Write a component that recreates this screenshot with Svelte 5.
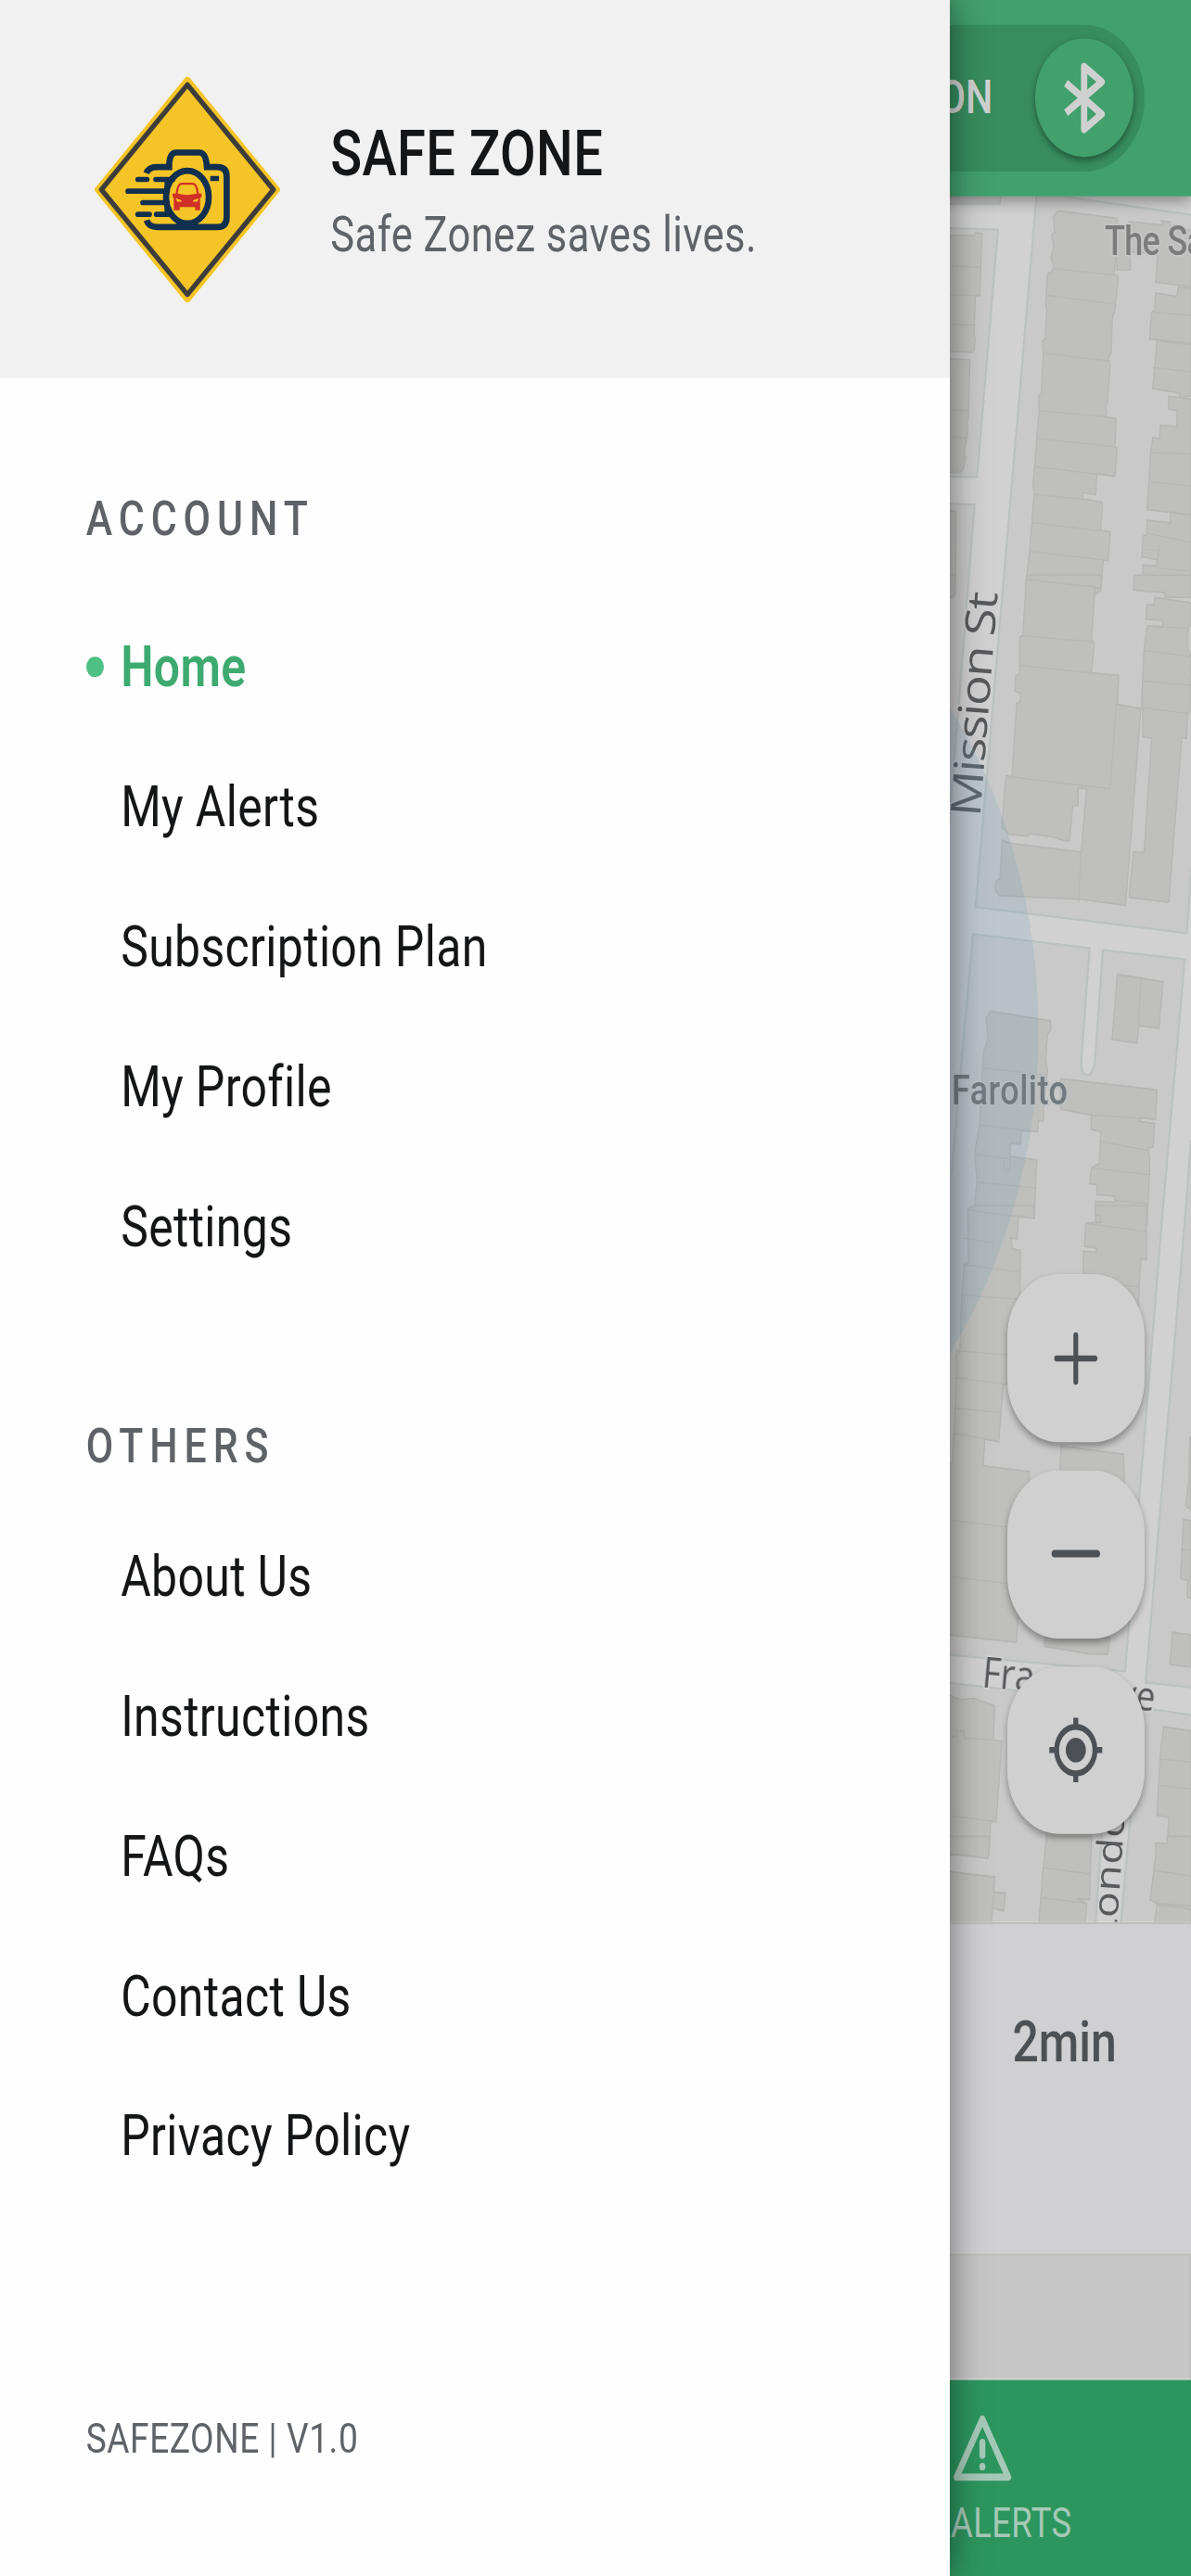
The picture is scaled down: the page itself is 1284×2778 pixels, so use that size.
<script lang="ts">
	type MenuItem = { label: string; active?: boolean };
	type Tile = { y: number; scale: number; buildings: string[]; walls: string };

	const account: MenuItem[] = [
		{ label: 'Home', active: true },
		{ label: 'My Alerts' },
		{ label: 'Subscription Plan' },
		{ label: 'My Profile' },
		{ label: 'Settings' }
	];

	const others: MenuItem[] = [
		{ label: 'About Us' },
		{ label: 'Instructions' },
		{ label: 'FAQs' },
		{ label: 'Contact Us' },
		{ label: 'Privacy Policy' }
	];

	// Street blocks in map coordinates
	const blocks = [
		'1000,205 1080,205 1078,219.6 1000,219.6',
		'1000,245 1076,247.3 1053.3,514.3 1000,513',
		'1000,542 1050.7,543.7 1034,754 1022,900 1000,900',
		'1118,205 1157,213 1290,232 1290,870 1279.3,1006 1051.7,978',
		'1284,1230 1278.7,1300 1235,1814 1290,1820 1290,1230'
	];

	// Building footprints, stored per tile in tile units
	const tiles: Tile[] = [
		{
			y: 0,
			scale: 0.40816,
			buildings: [
				'60,620 152,622 154,614 176,616 169,780 155,780 150,885 155,895 150,925 142,930 60,928',
				'60,947 137,949 132,1105 126,1112 130,1130 126,1160 118,1190 122,1210 116,1238 104,1248 60,1246',
				'60,1346 92,1350 90,1568 60,1568',
				'422,556 614,576 604,724 617,729 608,803 604,826 598,834 594,930 585,945 590,965 582,1060 575,1075 580,1085 575,1100 610,1105 606,1180 613,1183 606,1258 548,1250 544,1306 503,1301 500,1316 566,1326 560,1400 591,1404 584,1480 568,1480 560,1560 545,1568 320,1568 320,1525 330,1455 345,1300 341,1285 346,1235 353,1160 361,1085 359,1045 368,1040 374,930 371,900 380,895 386,820 382,800 388,722 402,718 408,700 398,680 408,650 402,620 412,612 406,572',
				'608,600 656,606 656,712 612,712',
				'650,584 760,594 755,582 785,586 783,596 852,606 852,756 738,745 744,670 650,664',
				'738,773 806,782 811,757 852,760 852,906 718,895 724,825 734,820',
				'742,899 852,910 852,1045 815,1048 815,1038 728,1026',
				'780,1046 852,1054 852,1358 710,1346 722,1190 728,1155 750,1158 753,1122 806,1126 808,1084 780,1080',
				'785,1354 852,1360 852,1568 668,1556 668,1522 695,1525 697,1492 740,1494 742,1478 693,1470 697,1416 708,1412 710,1374 785,1380'
			],
			walls:
				'M60 700L172 706M60 778L169 780M60 855L155 858M60 1080L132 1085M60 1150L126 1158M406 708L604 726M388 780L608 803M374 932L588 953M361 1084L575 1100M353 1157L606 1180M350 1232L606 1258M345 1305L500 1318M338 1380L560 1402M330 1455L584 1480M322 1528L560 1550M738 825L852 832M730 970L852 982M724 1195L852 1198M720 1272L852 1283M710 1408L852 1432M697 1450L748 1455M660 584L668 606M748 1440L744 1500L852 1508'
		},
		{
			y: 620,
			scale: 0.44643,
			buildings: [
				'60,0 88,0 86,50 60,60',
				'320,0 563,0 561,32 542,30 530,155 539,165 530,236 618,242 614,312 690,322 640,798 490,782 232,774 220,762 220,740 234,732 242,640 270,648 497,668 514,516 487,514 487,556 470,556 460,640 445,642 405,632 330,624 325,630 265,626 240,608 254,484 273,487 288,310 300,305 300,285 282,280 284,245 298,238 298,150 308,145',
				'668,0 852,0 852,54 768,52 768,42 666,36',
				'735,54 852,66 852,120 842,128 842,178 852,196 848,252 852,265 848,330 840,340 838,394 822,392 780,790 652,778 666,668 700,670 725,394 697,390 695,255 700,182 710,122 760,124 760,110 706,106 710,72 732,72',
				'614,964 762,982 748,1094 683,1088 678,1130 597,1122',
				'203,1053 397,1076 400,1096 388,1110 382,1170 388,1195 375,1288 375,1318 358,1318 356,1344 303,1342 300,1374 268,1372 266,1404 353,1412 345,1552 292,1550 292,1568 135,1568 132,1540 150,1534 160,1462 152,1394 168,1330 178,1190 182,1150 195,1120 190,1070',
				'430,1216 742,1243 737,1314 688,1310 690,1320 734,1324 730,1380 708,1386 718,1400 718,1445 710,1568 543,1568 543,1512 604,1514 606,1500 548,1496 548,1472 524,1470 530,1432 556,1420 560,1344 528,1338 530,1304 430,1290'
			],
			walls:
				'M318 10L560 30M303 146L530 160M300 218L530 236M273 487L590 516L618 242M497 668L488 788M690 322L695 255M710 122L842 128M700 182L852 196M697 255L848 266M697 320L840 334M690 970L683 1088M178 1190L388 1208M168 1328L356 1344M155 1400L266 1410M160 1466L352 1480M150 1535L292 1556M246 1408L268 1410L264 1438L248 1436ZM530 1304L737 1314M560 1368L718 1390M530 1432L718 1448M606 1510L710 1518'
		},
		{
			y: 1300,
			scale: 0.44643,
			buildings: [
				'145,0 344,0 344,30 293,24 293,38 290,80 270,78 274,104 301,108 298,265 258,430 245,432 230,570 185,564 180,628 330,642 287,1054 60,1036 60,625 80,622 90,480 92,360 105,345 110,220 118,142 132,135 130,10',
				'543,0 708,0 708,130 690,128 684,200 680,300 500,300 504,110 545,112 545,102 508,98 512,42 560,40 560,24 543,22',
				'432,580 634,600 637,680 425,680',
				'380,1042 590,1042 583,1084 520,1082 378,1064',
				'60,1180 105,1192 150,1190 218,1208 212,1290 240,1294 222,1488 204,1486 198,1568 60,1568',
				'848,560 852,560 852,735 835,725 840,694 845,665',
				'828,758 852,760 852,948 840,946 842,905 818,900',
				'792,1030 852,1036 852,1114 784,1108',
				'763,1258 852,1268 852,1548 776,1538 780,1478 742,1472 752,1330',
				'385,1510 530,1510 525,1568 380,1568'
			],
			walls:
				'M130 10L293 26M118 142L296 160M110 215L296 226M92 350L256 360M92 415L245 430M88 488L236 500M84 550L228 568M60 758L258 776M60 895L256 912M118 78L215 90M512 42L706 62M500 180L684 196M60 1280L94 1282L94 1268L118 1270L118 1286L212 1290M60 1472L222 1488M818 830L852 832M750 1336L852 1344M746 1400L852 1408'
		},
		{
			y: 1980,
			scale: 0.50886,
			buildings: [
				'60,0 200,0 196,46 60,36',
				'60,74 218,86 214,118 252,120 246,158 210,152 206,184 60,184',
				'385,0 530,0 524,134 485,132 515,142 510,184 360,184 372,80',
				'775,0 852,0 852,148 742,142 720,134 738,40 738,14 775,16',
				'742,144 852,154 852,184 734,184'
			],
			walls: 'M374 66L528 80M367 130L515 142M732 72L852 84M214 118L210 152'
		}
	];
</script>

{#snippet menu(title: string, items: MenuItem[])}
	<section class="group">
		<h2>{title}</h2>
		<ul>
			{#each items as item}
				<li class:active={item.active}>
					<span class="dot"></span>
					<span>{item.label}</span>
				</li>
			{/each}
		</ul>
	</section>
{/snippet}

<div class="viewport">
	<div class="screen">
		<main class="home">
			<header class="topbar">
				<div class="switch">
					<span>ON</span>
					<div class="knob">
						<svg viewBox="0 0 24 24" width="24" height="24">
							<path d="M6.5 8.3L17.3 16L12 19.8V4.2L17.3 8L6.5 15.7" />
						</svg>
					</div>
				</div>
			</header>

			<div class="map">
				<svg class="tiles" viewBox="0 211.4 1284 1861.2" preserveAspectRatio="none">
					<rect x="0" y="205" width="1284" height="1875" fill="#d1d1d2" />
					<g class="blocks">
						{#each blocks as points}
							<polygon {points} />
						{/each}
						<path d="M1049 1007L1174.7 1022L1165.5 1146Q1166 1159 1171.7 1159Q1179 1159 1180.5 1142L1189 1024L1277.3 1034L1254 1300L1213 1802L1000 1782V1300L1026 1263L1036 1150Z" />
						<path d="M1000 1812L1198 1834L1180 2090H1000Z" />
						<path d="M1229 1841L1290 1850V2090H1207Z" />
					</g>
					{#each tiles as tile}
						<g class="buildings" transform="translate(1000 {tile.y}) scale(.33333 {tile.scale})">
							{#each tile.buildings as points}
								<polygon {points} />
							{/each}
							<path d={tile.walls} />
						</g>
					{/each}
					<g class="street">
						<text transform="translate(1056.5 881) rotate(-85.5) scale(1.22 1)" font-size="45" textLength="199">Mission St</text>
						<text transform="translate(1058 1819) rotate(5) scale(1 1.2)" font-size="38">Fra</text>
						<text transform="translate(1205 1841) rotate(6) scale(1 1.2)" font-size="37">ve</text>
						<text class="wide" transform="translate(1203 2093) rotate(-86) scale(1.22 1)" font-size="38">London</text>
					</g>
					<g class="place">
						<text transform="translate(1191 274.5) scale(1 1.22)" font-size="36" textLength="108">The Sa</text>
					</g>
					<ellipse cx="643" cy="1110.5" rx="476.5" ry="580" fill="#78a5b9" fill-opacity=".22" />
					<g class="place tinted">
						<text transform="translate(1026 1191) scale(1 1.22)" font-size="36" textLength="125">Farolito</text>
					</g>
				</svg>

				<div class="controls">
					<button aria-label="Zoom in">
						<svg viewBox="0 0 24 24" width="24" height="24">
							<path d="M12 6.2V17.8M6.2 12H17.8" stroke-width="1.45" />
						</svg>
					</button>
					<button aria-label="Zoom out">
						<svg viewBox="0 0 24 24" width="24" height="24">
							<path d="M5.6 12H18.4" stroke-width="1.85" />
						</svg>
					</button>
					<button aria-label="Locate me">
						<svg class="locate" viewBox="0 0 24 24" width="24" height="24">
							<circle cx="12" cy="12" r="5.8" />
							<circle cx="12" cy="12" r="2.3" fill="currentColor" />
							<path d="M12 4V6M12 18V20M4 12H6M18 12H20" />
						</svg>
					</button>
				</div>
			</div>

			<div class="status"><span>2min</span></div>
			<div class="strip"></div>

			<nav class="tabbar">
				<div class="tab">
					<svg viewBox="0 0 18 17" width="18" height="17">
						<path d="M9 1.3L16.8 15.7H1.2Z" stroke-width="1.8" />
						<path d="M9 7.1V10.3M9 13.1V13.15" stroke-width="1.8" />
					</svg>
					<span>ALERTS</span>
				</div>
			</nav>
		</main>

		<aside class="drawer">
			<header class="brand">
				<svg class="logo" viewBox="65 66 600 730" preserveAspectRatio="none">
					<path d="M365 76L655 431L365 786L75 431Z" fill="#f5c426" stroke="#f5c426" stroke-width="20" stroke-linejoin="round" />
					<path d="M365 92L643 431L365 770L87 431Z" fill="none" stroke="#3d3d3b" stroke-width="16" stroke-linejoin="round" />
					<g fill="none" stroke="#112f4e" stroke-width="20">
						<path d="M232 378Q240 358 266 358H306Q306 311 328 311H404Q425 311 428 358H462Q492 358 492 388V520Q492 552 462 552H268Q240 552 233 530" />
						<ellipse cx="365" cy="455" rx="69" ry="85" />
						<path d="M205 398H234M263 398H318M173 436H300M221 473H300M205 511H242M265 511H312" stroke-width="17" stroke-linecap="round" />
						<path d="M439 395H467" stroke-width="16" />
						<path d="M298 400V510" stroke-width="14" />
						<path d="M330 546H398" stroke-width="18" />
					</g>
					<path d="M330 446Q334 412 346 412H383Q395 412 399 446" fill="none" stroke="#d03027" stroke-width="7" />
					<path d="M317 444H334Q364 452 395 444H411V454L406 459V498H390V487H340V498H321V459L317 454Z" fill="#d03027" />
					<path d="M327 459L344 465L347 470H332ZM402 459L385 465L382 470H397Z" fill="#f5c426" />
				</svg>
				<div class="brand-text">
					<h1>SAFE ZONE</h1>
					<p>Safe Zonez saves lives.</p>
				</div>
			</header>

			{@render menu('ACCOUNT', account)}
			{@render menu('OTHERS', others)}

			<footer>SAFEZONE | V1.0</footer>
		</aside>
	</div>
</div>

<style>
	:global(body) {
		margin: 0;
		background: #fefefe;
	}

	.viewport {
		width: 1284px;
		height: 2778px;
		overflow: hidden;
	}

	/* 360x640 layout stretched over the whole viewport */
	.screen {
		position: relative;
		width: 360px;
		height: 640px;
		overflow: hidden;
		zoom: 3.56667;
		transform: scaleY(1.217);
		transform-origin: 0 0;
		font-family: Roboto, 'Liberation Sans', sans-serif;
	}

	svg {
		display: block;
	}

	.home {
		display: flex;
		flex-direction: column;
		height: 100%;
	}

	.topbar {
		position: relative;
		z-index: 1;
		display: flex;
		justify-content: flex-end;
		box-sizing: border-box;
		height: 48.7px;
		padding: 6.1px 14px 0 0;
		background: #42a06d;
		box-shadow: 0 1px 4px rgba(0, 0, 0, 0.4);
	}

	.switch {
		display: flex;
		align-items: center;
		justify-content: flex-end;
		gap: 12.9px;
		box-sizing: border-box;
		width: 76px;
		height: 36.4px;
		padding-right: 3.4px;
		border-radius: 18.2px;
		background: #378d5d;
		color: #cfd1d0;
		font-size: 11.6px;
		font-weight: 500;
	}

	.switch span {
		padding-bottom: 0.5px;
	}

	.knob {
		display: flex;
		align-items: center;
		justify-content: center;
		width: 29.6px;
		height: 29.6px;
		border-radius: 50%;
		background: #42a06d;
		box-shadow: 0 0.8px 1.8px rgba(0, 0, 0, 0.4);
	}

	.knob path {
		fill: none;
		stroke: #cfd1d0;
		stroke-width: 1.9px;
		stroke-linejoin: round;
	}

	.map {
		position: relative;
		height: 428.8px;
		border-bottom: 0.7px solid #bebebc;
	}

	.tiles {
		width: 100%;
		height: 100%;
	}

	.blocks {
		fill: #c9c9c9;
		stroke: #bcc1c0;
		stroke-width: 2.2px;
	}

	.buildings {
		fill: #bfbfbd;
		stroke: #b6b6b4;
		stroke-width: 4px;
	}

	.buildings path {
		fill: none;
		stroke-width: 3px;
	}

	.street {
		font-family: 'Open Sans', sans-serif;
		fill: #58595b;
		stroke: #d1d1d2;
		stroke-width: 3px;
		paint-order: stroke;
	}

	.wide {
		letter-spacing: 0.5px;
	}

	.place {
		font-family: Roboto, sans-serif;
		font-weight: 500;
		fill: #7c7c7c;
		stroke: #c6c6c6;
		stroke-width: 3px;
		paint-order: stroke;
	}

	.tinted {
		fill: #727a7f;
		stroke: #bac1c6;
		stroke-opacity: 0.5;
	}

	.controls {
		position: absolute;
		top: 267.9px;
		right: 13.9px;
		display: flex;
		flex-direction: column;
		gap: 7px;
	}

	button {
		display: flex;
		align-items: center;
		justify-content: center;
		width: 41.7px;
		height: 41.7px;
		padding: 0;
		border: none;
		border-radius: 15.5px;
		background: #d0d0d0;
		box-shadow: 0 1px 2px rgba(0, 0, 0, 0.33);
		color: #4d5156;
	}

	button svg {
		fill: none;
		stroke: currentColor;
		stroke-linecap: round;
	}

	button .locate {
		stroke-width: 1.5px;
		stroke-linecap: butt;
	}

	.status {
		display: flex;
		justify-content: flex-end;
		box-sizing: border-box;
		height: 81.9px;
		padding: 21.6px 22.5px 0 0;
		background: #d0d0d2;
		color: #4d5156;
		font-size: 14px;
		font-weight: 500;
		line-height: 16px;
	}

	.strip {
		box-sizing: border-box;
		height: 31.3px;
		border: 0.8px solid #bfbfbd;
		border-bottom-color: #d0d0ce;
		background: #c6c6c6;
	}

	.tabbar {
		display: flex;
		justify-content: flex-end;
		flex: 1;
		padding-right: 36px;
		background: #2d965f;
		color: #a6c9b7;
	}

	.tab {
		display: flex;
		flex-direction: column;
		align-items: flex-start;
		font-size: 10.2px;
		line-height: 12px;
		letter-spacing: 0.12px;
	}

	.tab svg {
		margin: 8.4px 0 4.4px 0.5px;
		fill: none;
		stroke: currentColor;
		stroke-linejoin: round;
		stroke-linecap: round;
	}

	.drawer {
		position: absolute;
		z-index: 2;
		top: 0;
		left: 0;
		display: flex;
		flex-direction: column;
		width: 287px;
		height: 640px;
		background: #fefefe;
		box-shadow: 0 0 9px rgba(0, 0, 0, 0.5);
	}

	.brand {
		display: flex;
		align-items: center;
		box-sizing: border-box;
		height: 94px;
		padding-left: 28.5px;
		background: #f1f1f1;
	}

	.logo {
		width: 56.1px;
		height: 56.1px;
	}

	.brand-text {
		padding: 1.2px 0 0 15.3px;
	}

	h1 {
		margin: 0;
		color: #141517;
		font-size: 15.7px;
		font-weight: 500;
		line-height: 22px;
		letter-spacing: 0.11px;
	}

	p {
		margin: 0;
		color: #5f6368;
		font-size: 12.2px;
		line-height: 18.6px;
		letter-spacing: 0.12px;
	}

	.group h2 {
		margin: 25.8px 0 10.5px 26px;
		color: #5f6368;
		font-size: 12px;
		font-weight: 500;
		line-height: 18px;
		letter-spacing: 1.95px;
	}

	.group + .group h2 {
		margin: 27.8px 0 6.1px 26px;
	}

	ul {
		margin: 0;
		padding: 0;
		list-style: none;
	}

	li {
		display: flex;
		align-items: center;
		height: 34.8px;
		padding-left: 26.1px;
		color: #141517;
		font-size: 14px;
		letter-spacing: 0.1px;
	}

	.dot {
		width: 5.3px;
		height: 5.3px;
		margin-right: 5.1px;
		border-radius: 50%;
	}

	.active {
		color: #3daa70;
		font-weight: 600;
	}

	.active .dot {
		background: #4dc083;
	}

	footer {
		margin-top: auto;
		padding: 0 0 28px 26px;
		color: #5f6368;
		font-size: 10.4px;
		line-height: 12px;
		letter-spacing: 0.16px;
	}
</style>
